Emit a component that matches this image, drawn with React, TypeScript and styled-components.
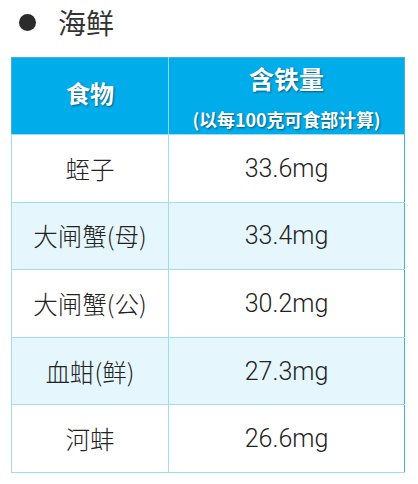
import styled, { createGlobalStyle } from "styled-components";

const GlobalStyle = createGlobalStyle`
  html, body {
    margin: 0;
    padding: 0;
    background: #ffffff;
    font-family: "Liberation Sans", "Noto Sans CJK SC", sans-serif;
  }
`;

type Row = { food: string; iron: string };

const rows: Row[] = [
  { food: "蛭子", iron: "33.6mg" },
  { food: "大闸蟹(母)", iron: "33.4mg" },
  { food: "大闸蟹(公)", iron: "30.2mg" },
  { food: "血蚶(鲜)", iron: "27.3mg" },
  { food: "河蚌", iron: "26.6mg" },
];

export default function App() {
  return (
    <>
      <GlobalStyle />
      <Page>
        <Heading>
          <Bullet />
          <Title>海鲜</Title>
        </Heading>
        <Table>
          <colgroup>
            <col style={{ width: 157 }} />
            <col />
          </colgroup>
          <thead>
            <tr>
              <HeadCell $shift={-4}>食物</HeadCell>
              <HeadCell $shift={6}>
                <HeadMain>含铁量</HeadMain>
                <HeadNote>(以每100克可食部计算)</HeadNote>
              </HeadCell>
            </tr>
          </thead>
          <tbody>
            {rows.map((r, i) => (
              <BodyRow key={r.food} $alt={i % 2 === 1}>
                <FoodCell>{r.food}</FoodCell>
                <IronCell>{r.iron}</IronCell>
              </BodyRow>
            ))}
          </tbody>
        </Table>
      </Page>
    </>
  );
}

const Page = styled.div`
  padding: 2px 13px 0 11px;
  width: 394px;
`;

const Heading = styled.div`
  display: flex;
  align-items: center;
  height: 40px;
  margin-bottom: 15px;
`;

const Bullet = styled.span`
  display: block;
  width: 17px;
  height: 17px;
  border-radius: 50%;
  background: #2b2b2b;
  margin-left: 8px;
  margin-right: 22px;
`;

const Title = styled.h2`
  margin: 0;
  font-family: "Noto Sans CJK SC", sans-serif;
  font-weight: 400;
  font-size: 28px;
  line-height: 34px;
  color: #333333;
`;

const Table = styled.table`
  width: 394px;
  border-collapse: collapse;
  table-layout: fixed;
  border: 1px solid #45b3c9;
`;

const HeadCell = styled.th<{ $shift: number }>`
  background: #00adea;
  color: #ffffff;
  height: 68px;
  padding: ${({ $shift }) => 4 + $shift}px 0 ${({ $shift }) => 4 - $shift}px;
  border-left: 1px solid #8fd6ee;
  font-family: "Noto Sans CJK SC", sans-serif;
  font-weight: 700;
  font-size: 24px;
  text-shadow: 1px 1px 2px rgba(0, 60, 90, 0.7);
  text-align: center;
  vertical-align: middle;
  &:first-child {
    border-left: none;
  }
`;

const HeadMain = styled.div`
  font-size: 25px;
  line-height: 30px;
`;

const HeadNote = styled.div`
  font-size: 18px;
  line-height: 22px;
  margin-top: 15px;
  letter-spacing: -0.1px;
`;

const BodyRow = styled.tr<{ $alt: boolean }>`
  background: ${({ $alt }) => ($alt ? "#e5f7fd" : "#ffffff")};
  height: 67.6px;
`;

const FoodCell = styled.td`
  padding: 0;
  border: 1px solid #a3dced;
  text-align: center;
  font-family: "Noto Sans CJK SC", sans-serif;
  font-weight: 300;
  font-size: 24.5px;
  color: #222222;
`;

const IronCell = styled.td`
  padding: 0;
  border: 1px solid #a3dced;
  border-right-color: #45b3c9;
  text-align: center;
  font-family: "Roboto", "Noto Sans", sans-serif;
  font-weight: 300;
  font-size: 25px;
  color: #222222;
`;
